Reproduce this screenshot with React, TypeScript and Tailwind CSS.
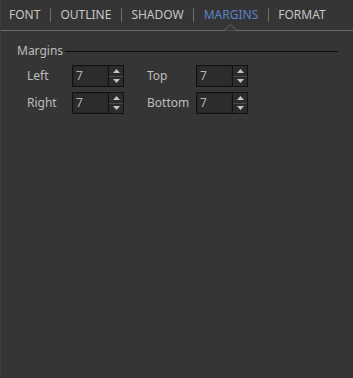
import React from 'react';

const tabs = ['FONT', 'OUTLINE', 'SHADOW', 'MARGINS', 'FORMAT'];

function Spin({ value }: { value: string }) {
  return (
    <div className="flex h-[22px] w-[52px] border border-[#121212] bg-[#2c2c2c]">
      <div className="flex flex-1 items-center border border-[#262626] pl-[2px] text-[12px] leading-none text-[#b4b4b4]">
        {value}
      </div>
      <div className="flex w-[15px] flex-col border-l border-[#121212]">
        <div className="flex flex-1 items-center justify-center border-b border-[#4a4a4a]">
          <svg width="7" height="4" viewBox="0 0 7 4">
            <path d="M0 4 L3.5 0 L7 4 Z" fill="#c4c4c4" />
          </svg>
        </div>
        <div className="flex flex-1 items-center justify-center">
          <svg width="7" height="4" viewBox="0 0 7 4">
            <path d="M0 0 L3.5 4 L7 0 Z" fill="#c4c4c4" />
          </svg>
        </div>
      </div>
    </div>
  );
}

function Field({ label, value, labelW }: { label: string; value: string; labelW: string }) {
  return (
    <div className="flex h-[22px] items-center">
      <span className={`${labelW} text-[12px] leading-none text-[#bdbdbd]`}>{label}</span>
      <Spin value={value} />
    </div>
  );
}

export default function App() {
  return (
    <div
      className="h-[378px] w-[353px] border-l border-[#3e3e3e] bg-[#353535]"
      style={{ fontFamily: '"Noto Sans", "Open Sans", sans-serif' }}
    >
      {/* Tab strip */}
      <div className="relative flex h-[31px] items-center border-b border-[#6b6b6b] pl-[8px]">
        {tabs.map((t, i) => (
          <React.Fragment key={t}>
            {i > 0 && <div className="mx-[9.5px] h-[14px] w-px bg-[#6e6e6e]" />}
            <span
              className={`text-[12px] ${t === 'MARGINS' ? 'text-[#5b82c6]' : 'text-[#c6c6c6]'}`}
            >
              {t}
            </span>
          </React.Fragment>
        ))}
        <svg
          className="absolute left-[223px] top-[24px]"
          width="13"
          height="8"
          viewBox="0 0 13 8"
        >
          <path d="M0 6.5 L6.5 0.5 L13 6.5" stroke="#6b6b6b" fill="#353535" />
        </svg>
      </div>

      {/* Margins group */}
      <div className="pl-[16px] pr-[15px] pt-[11px]">
        <div className="flex items-center gap-[2px]">
          <span className="text-[12px] text-[#bdbdbd]">Margins</span>
          <div className="h-px flex-1 bg-[#0f0f0f]" />
        </div>
        <div className="mt-[5px] flex flex-col gap-[5px] pl-[10px]">
          <div className="flex">
            <div className="w-[120px]">
              <Field label="Left" value="7" labelW="w-[45px]" />
            </div>
            <Field label="Top" value="7" labelW="w-[49px]" />
          </div>
          <div className="flex">
            <div className="w-[120px]">
              <Field label="Right" value="7" labelW="w-[45px]" />
            </div>
            <Field label="Bottom" value="7" labelW="w-[49px]" />
          </div>
        </div>
      </div>
    </div>
  );
}
